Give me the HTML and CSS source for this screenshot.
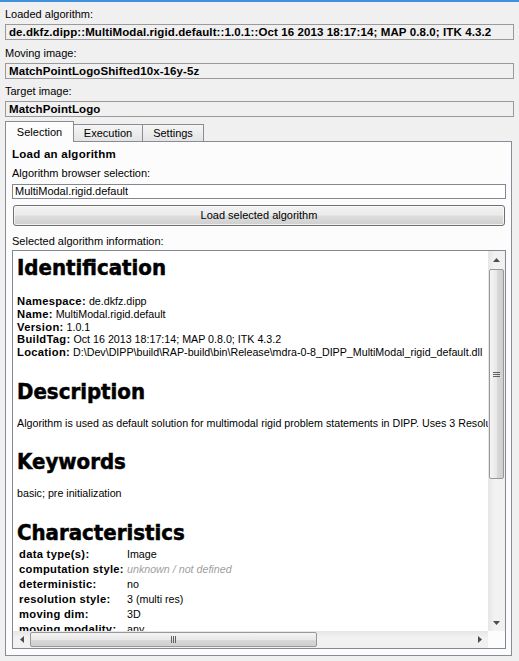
FILE: index.html
```html
<!DOCTYPE html>
<html>
<head>
<meta charset="utf-8">
<link rel="stylesheet" href="styles.css">
</head>
<body>
<div class="topbar"></div>
<div class="main">
  <div class="field-label first">Loaded algorithm:</div>
  <div class="field-box">de.dkfz.dipp::MultiModal.rigid.default::1.0.1::Oct 16 2013 18:17:14; MAP 0.8.0; ITK 4.3.2</div>
  <div class="field-label">Moving image:</div>
  <div class="field-box">MatchPointLogoShifted10x-16y-5z</div>
  <div class="field-label">Target image:</div>
  <div class="field-box">MatchPointLogo</div>

  <div class="tabs">
    <div class="tab active tab-sel">Selection</div>
    <div class="tab tab-exec">Execution</div>
    <div class="tab tab-set">Settings</div>
  </div>
  <div class="panel">
    <div class="section-title">Load an algorithm</div>
    <div class="sub-label">Algorithm browser selection:</div>
    <div class="input">MultiModal.rigid.default</div>
    <div class="button">Load selected algorithm</div>
    <div class="info-label">Selected algorithm information:</div>
    <div class="browser">
      <div class="viewport">
        <div class="doc">
          <h1 class="h-first">Identification</h1>
          <div class="props">
            <div><b>Namespace:</b> de.dkfz.dipp</div>
            <div><b>Name:</b> MultiModal.rigid.default</div>
            <div><b>Version:</b> 1.0.1</div>
            <div><b>BuildTag:</b> Oct 16 2013 18:17:14; MAP 0.8.0; ITK 4.3.2</div>
            <div><b>Location:</b> D:\Dev\DIPP\build\RAP-build\bin\Release\mdra-0-8_DIPP_MultiModal_rigid_default.dll</div>
          </div>
          <h1 class="h-desc">Description</h1>
          <p class="para">Algorithm is used as default solution for multimodal rigid problem statements in DIPP. Uses 3 Resolution levels and pre initialization.</p>
          <h1>Keywords</h1>
          <p class="para">basic; pre initialization</p>
          <h1>Characteristics</h1>
          <table class="chars">
            <tr><td class="k">data type(s):</td><td>Image</td></tr>
            <tr><td class="k">computation style:</td><td class="undef">unknown / not defined</td></tr>
            <tr><td class="k">deterministic:</td><td>no</td></tr>
            <tr><td class="k">resolution style:</td><td>3 (multi res)</td></tr>
            <tr><td class="k">moving dim:</td><td>3D</td></tr>
            <tr><td class="k">moving modality:</td><td>any</td></tr>
            <tr><td class="k">target dim:</td><td>3D</td></tr>
            <tr><td class="k">target modality:</td><td>any</td></tr>
          </table>
        </div>
      </div>
      <div class="vscroll">
        <div class="sbtn"><svg width="7" height="4" viewBox="0 0 7 4"><path d="M0 4 L3.5 0 L7 4 Z" fill="#4d4d4d"/></svg></div>
        <div class="vthumb"><span class="grip-v"></span></div>
        <div class="track"></div>
        <div class="sbtn"><svg width="7" height="4" viewBox="0 0 7 4"><path d="M0 0 L3.5 4 L7 0 Z" fill="#4d4d4d"/></svg></div>
      </div>
      <div class="hscroll">
        <div class="sbtn"><svg width="4" height="7" viewBox="0 0 4 7"><path d="M4 0 L0 3.5 L4 7 Z" fill="#4d4d4d"/></svg></div>
        <div class="hthumb"><span class="grip-h"></span></div>
        <div class="track"></div>
        <div class="sbtn"><svg width="4" height="7" viewBox="0 0 4 7"><path d="M0 0 L4 3.5 L0 7 Z" fill="#4d4d4d"/></svg></div>
      </div>
      <div class="corner"></div>
    </div>
  </div>
</div>
</body>
</html>
```
FILE: styles.css
```css
* { box-sizing: border-box; }
html, body { margin: 0; padding: 0; }
body {
  background: #f0f0f0;
  font-family: "Liberation Sans", Arial, sans-serif;
  font-size: 11px;
  color: #000;
  width: 519px;
  height: 661px;
  overflow: hidden;
}
.topbar { height: 2px; background: #3f8fdf; }
.main { padding: 0 5px; }

.field-label { line-height: 15px; margin-top: 5.5px; }
.field-label.first { margin-top: 5px; }
.field-box {
  height: 16px;
  margin-top: 2px;
  border: 1px solid #9a9a9a;
  line-height: 14px;
  font-weight: bold;
  font-size: 11.5px;
  letter-spacing: 0.1px;
  padding-left: 3px;
  white-space: nowrap;
  overflow: hidden;
}

.tabs {
  display: flex;
  align-items: flex-end;
  height: 20px;
  margin-top: 4px;
  position: relative;
  z-index: 2;
}
.tab {
  height: 17px;
  border: 1px solid #898c95;
  border-bottom: none;
  background: linear-gradient(#f5f5f5, #e4e4e4);
  display: flex;
  align-items: center;
  justify-content: center;
  line-height: 13px;
}
.tab.active {
  height: 21px;
  margin-bottom: -1px;
  background: #fcfcfc;
  position: relative;
  z-index: 3;
}
.tab-sel { width: 69px; }
.tab-exec { width: 70px; margin-left: -1px; }
.tab-set { width: 62px; margin-left: -1px; }

.panel {
  width: 507px;
  height: 515px;
  border: 1px solid #898c95;
  background: #fcfcfc;
  padding: 5px 5px 6px 6px;
  display: flex;
  flex-direction: column;
}
.section-title {
  font-weight: bold;
  font-size: 11.5px;
  letter-spacing: 0.25px;
  line-height: 15px;
}
.sub-label { line-height: 15px; margin-top: 4px; }
.input {
  height: 15px;
  margin-top: 3px;
  border: 1px solid #828790;
  background: #fff;
  padding-left: 2px;
  line-height: 13px;
}
.button {
  height: 21px;
  margin: 6px 1px 0;
  border: 1px solid #707070;
  border-radius: 3px;
  background: linear-gradient(#f2f2f2, #ebebeb 48%, #dddddd 52%, #cfcfcf);
  box-shadow: inset 0 0 0 1px rgba(255,255,255,0.7);
  text-align: center;
  line-height: 19px;
}
.info-label { line-height: 15px; margin-top: 8px; }

.browser {
  margin-top: 1px;
  flex: 1;
  border: 1px solid #828790;
  background: #fff;
  display: grid;
  grid-template-columns: 1fr 17px;
  grid-template-rows: 1fr 17px;
  overflow: hidden;
}
.viewport { overflow: hidden; }
.doc {
  padding: 4px 0 0 4px;
  white-space: nowrap;
  font-size: 10.7px;
}
.doc b, .chars td.k {
  font-weight: bold;
  font-size: 11.2px;
  letter-spacing: 0.3px;
}
.doc h1 {
  font-family: "DejaVu Sans Condensed", "DejaVu Sans", sans-serif;
  font-stretch: condensed;
  font-weight: bold;
  font-size: 22px;
  line-height: 26px;
  margin: 19.5px 0 0;
  -webkit-text-stroke: 0.5px #000;
}
.doc h1.h-first { margin-top: 0; }
.doc h1.h-desc { margin-top: 21px; }
.props { margin-top: 14.4px; line-height: 12.6px; }
.para { margin: 12px 0 0; line-height: 12.6px; }
.chars {
  border-collapse: collapse;
  margin: 1px 0 0 2px;
}
.chars td { padding: 0; height: 15px; line-height: 15px; vertical-align: middle; }
.chars td.k { width: 108px; }
.chars td.undef { color: #a0a0a0; font-style: italic; }

.vscroll {
  display: flex;
  flex-direction: column;
  background: linear-gradient(to right, #e6e6e6, #f2f2f2 40%, #f0f0f0);
}
.hscroll {
  display: flex;
  background: linear-gradient(#e6e6e6, #f2f2f2 40%, #f0f0f0);
}
.sbtn {
  width: 17px;
  height: 17px;
  flex: none;
  display: flex;
  align-items: center;
  justify-content: center;
}
.track { flex: 1; }
.vthumb {
  height: 210px;
  width: 15px;
  margin: 1px 0 0 1px;
  border: 1px solid #979797;
  border-radius: 2px;
  background: linear-gradient(to right, #f4f4f4, #e8e8e8 50%, #d9d9d9 51%, #cfcfcf);
  display: flex;
  align-items: center;
  justify-content: center;
  flex: none;
}
.grip-v {
  width: 7px;
  height: 5px;
  border-top: 1px solid #606060;
  border-bottom: 1px solid #606060;
  background: linear-gradient(#606060, #606060);
  background-size: 100% 1px;
  background-position: 0 1px;
  background-repeat: no-repeat;
}
.hthumb {
  width: 287px;
  height: 15px;
  margin: 1px 0 0 0;
  border: 1px solid #979797;
  border-radius: 2px;
  background: linear-gradient(#f4f4f4, #e8e8e8 50%, #d9d9d9 51%, #cfcfcf);
  display: flex;
  align-items: center;
  justify-content: center;
  flex: none;
}
.grip-h {
  width: 5px;
  height: 7px;
  border-left: 1px solid #606060;
  border-right: 1px solid #606060;
  background: linear-gradient(to right, #606060, #606060);
  background-size: 1px 100%;
  background-position: 1px 0;
  background-repeat: no-repeat;
}
.corner { background: #fcfcfc; }
```
